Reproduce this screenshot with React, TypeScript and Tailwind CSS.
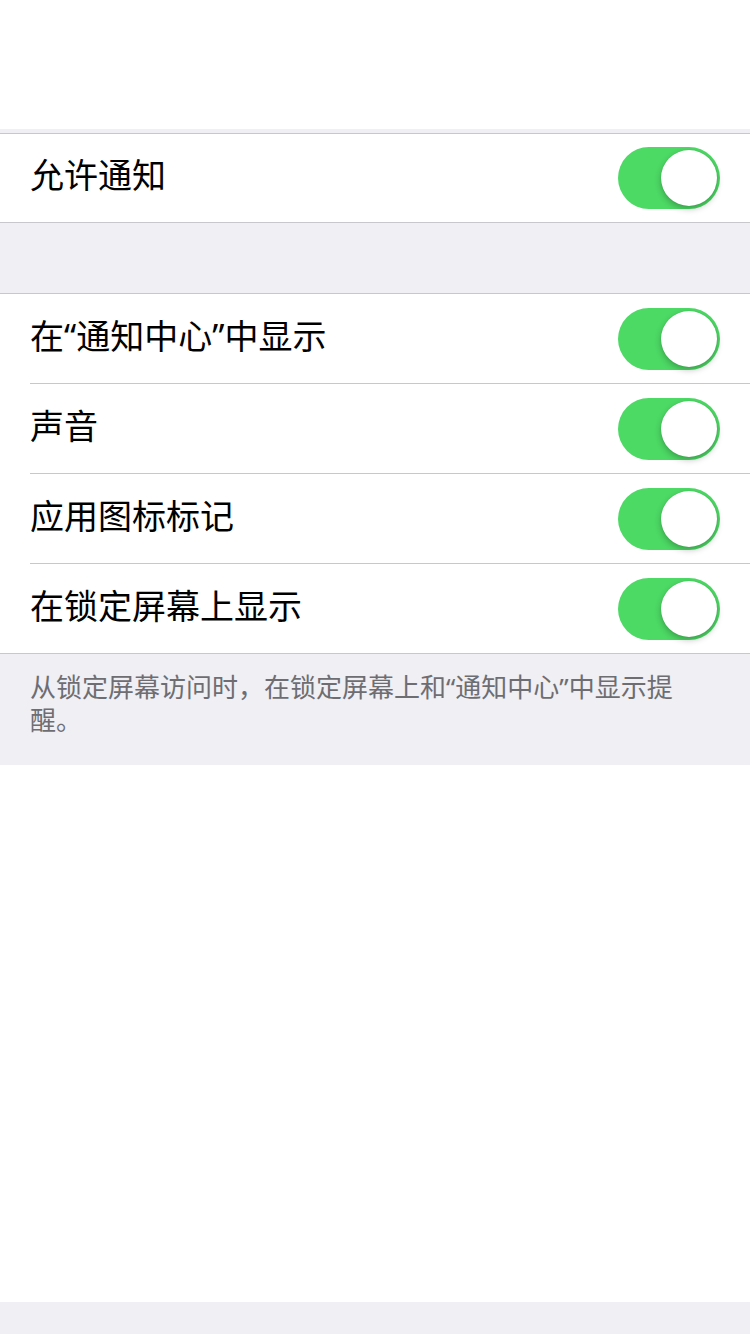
import React from "react";

const font = { fontFamily: '"Noto Sans", "Noto Sans CJK SC", sans-serif' };

function Toggle() {
  return (
    <div className="relative w-[102px] h-[62px] rounded-full bg-[#4cd964] shrink-0">
      <div className="absolute right-[3px] top-[3px] w-[56px] h-[56px] rounded-full bg-white shadow-[0_3px_6px_rgba(0,0,0,0.25),0_0_1px_rgba(0,0,0,0.2)]" />
    </div>
  );
}

function Label({ children }: { children: React.ReactNode }) {
  return <span className="text-[34px] leading-[40px] text-black mb-[6px]">{children}</span>;
}

function Row({ label }: { label: string }) {
  return (
    <div className="pl-[30px] bg-white">
      <div className="h-[90px] flex items-center justify-between pr-[30px] border-b border-[#c8c7cc]">
        <Label>{label}</Label>
        <Toggle />
      </div>
    </div>
  );
}

export default function App() {
  return (
    <div className="w-[750px] h-[1334px] bg-white flex flex-col" style={font}>
      <div className="h-[129px] bg-white" />
      <div className="h-[4px] bg-[#efeff4]" />
      <div className="bg-white border-t border-b border-[#c8c7cc] h-[90px] flex items-center justify-between pl-[30px] pr-[30px]">
        <Label>允许通知</Label>
        <Toggle />
      </div>
      <div className="h-[70px] bg-[#efeff4]" />
      <div className="bg-white border-t border-b border-[#c8c7cc]">
        <Row label="在“通知中心”中显示" />
        <Row label="声音" />
        <Row label="应用图标标记" />
        <div className="h-[89px] flex items-center justify-between pl-[30px] pr-[30px]">
          <Label>在锁定屏幕上显示</Label>
          <Toggle />
        </div>
      </div>
      <div className="bg-[#efeff4] h-[111px] pt-[17px] pl-[30px] pr-[50px]">
        <p className="text-[26px] leading-[33px] text-[#6d6d72]">
          从锁定屏幕访问时，在锁定屏幕上和“通知中心”中显示提醒。
        </p>
      </div>
      <div className="flex-1 bg-white" />
      <div className="h-[32px] bg-[#efeff4]" />
    </div>
  );
}
